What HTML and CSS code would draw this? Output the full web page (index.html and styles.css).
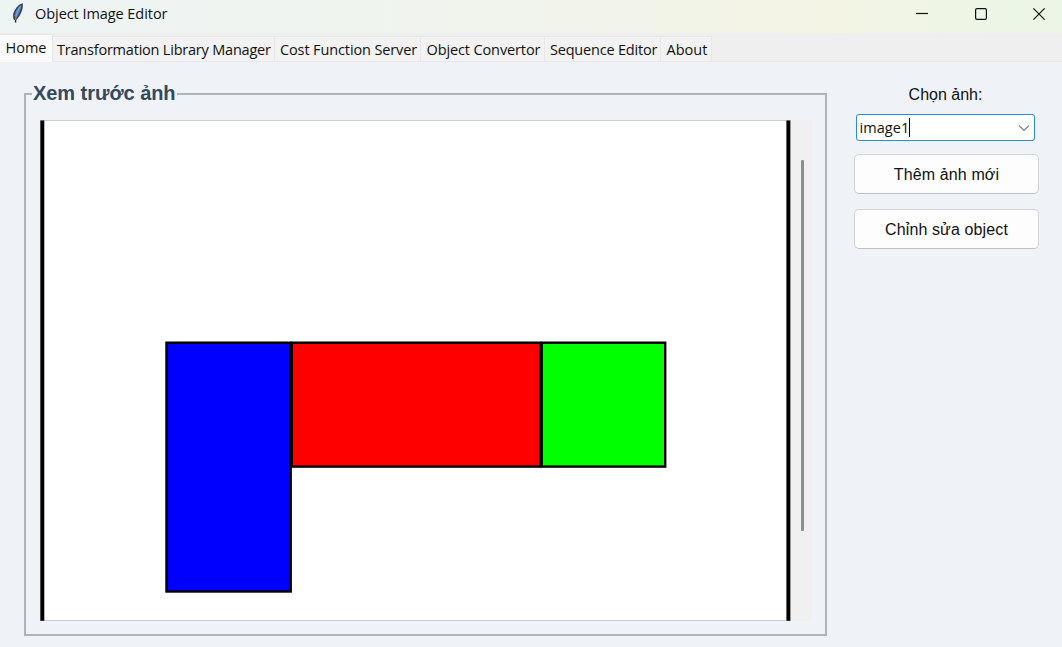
FILE: index.html
```html
<!DOCTYPE html>
<html lang="vi">
<head>
<meta charset="utf-8">
<title>Object Image Editor</title>
<link rel="stylesheet" href="styles.css">
</head>
<body>
<div class="window">
  <header class="titlebar">
    <svg class="feather" width="18" height="22" viewBox="0 0 18 22">
      <path d="M6.500 20.500L6.800 17" fill="none" stroke="#222" stroke-width="1.300"/>
      <path d="M13.800 1.200C9.500 2 5.200 7 4 13L4.300 17L6.300 18.500C10.500 15.500 14.600 8 13.800 1.200Z" fill="#3c434c"/>
      <path d="M12.300 3C8.800 5 6.200 9.500 5.400 14L7.300 15.500C10 12 12.200 7.500 12.300 3Z" fill="#4688cf"/>
      <path d="M11.500 4C9 8 7.300 12 6.500 17.500" fill="none" stroke="#a5bdd5" stroke-width=".7"/>
    </svg>
    <h1 class="title">Object Image Editor</h1>
    <div class="controls">
      <svg width="12" height="12" viewBox="0 0 12 12"><path d="M0 5.500H12"/></svg>
      <svg width="12" height="12" viewBox="0 0 12 12"><rect x=".6" y=".6" width="10.800" height="10.800" rx="1.300"/></svg>
      <svg width="12" height="12" viewBox="0 0 12 12"><path d="M.4 .4L11.600 11.600M11.600 .4L.4 11.600"/></svg>
    </div>
  </header>
  <nav class="tabs">
    <a class="tab tab-home">Home</a>
    <a class="tab tab-library">Transformation Library Manager</a>
    <a class="tab tab-cost">Cost Function Server</a>
    <a class="tab tab-convertor">Object Convertor</a>
    <a class="tab tab-sequence">Sequence Editor</a>
    <a class="tab tab-about">About</a>
  </nav>
  <main class="content">
    <fieldset class="preview">
      <legend class="preview-title">Xem trước ảnh</legend>
      <div class="viewer">
        <svg class="canvas" width="751" height="502" viewBox="0 0 751 502">
          <rect width="751" height="501" fill="#fff"/>
          <path d="M0 .5H751M0 500.500H751" stroke="#c9ccd0"/>
          <path d="M2.300 .5V500.700M748.400 .5V500.700" stroke="#000" stroke-width="4"/>
          <g stroke="#000" stroke-width="2.400">
            <rect x="126.500" y="222.700" width="124.200" height="248.800" fill="#00f"/>
            <rect x="251.800" y="222.700" width="248.800" height="123.900" fill="#f00"/>
            <rect x="501.700" y="222.700" width="123.500" height="123.900" fill="#0f0"/>
          </g>
        </svg>
        <div class="scrollbar"><div class="thumb"></div></div>
      </div>
    </fieldset>
    <aside class="side">
      <label class="label">Chọn ảnh:</label>
      <div class="combo">
        <span class="value">image1</span><span class="caret"></span>
        <svg class="chevron" width="12" height="8" viewBox="0 0 12 8"><path d="M1 1.500L6 6.300L11 1.500"/></svg>
      </div>
      <button class="button button-add"><span>Thêm ảnh mới</span></button>
      <button class="button button-edit"><span>Chỉnh sửa object</span></button>
    </aside>
  </main>
</div>
</body>
</html>
```

FILE: styles.css
```css
* { box-sizing: border-box; }
body { margin: 0; font-family: "Open Sans", "Noto Sans", sans-serif; color: #111; }
.window { width: 1062px; height: 647px; display: flex; flex-direction: column; background: #eff3f8; overflow: hidden; }

.titlebar { height: 33px; flex: none; display: flex; align-items: flex-start; padding: 2px 17px 0 9px; background: linear-gradient(90deg, #edf4f4 0%, #f1f4ed 45%, #f3f4e4 78%, #eaf6e6 100%); }
.feather { flex: none; }
.title { margin: 3px 0 0 8px; font-size: 14.5px; line-height: 18px; font-weight: 400; letter-spacing: -.06px; white-space: nowrap; }
.controls { margin: 6px 0 0 auto; display: flex; gap: 46.5px; }
.controls svg { fill: none; stroke: #111; stroke-width: 1.2; overflow: visible; }

.tabs { height: 29px; flex: none; display: flex; align-items: flex-end; background: #efefef; border-bottom: 1px solid #e8e8e8; }
.tab { height: 25px; flex: none; padding: 4px 0 0 4px; background: #f2f2f2; border: 1px solid #e8e8e8; border-width: 1px 1px 0 0; font-size: 14.5px; line-height: 18px; white-space: nowrap; overflow: hidden; }
.tab-home { width: 53px; height: 28px; margin-bottom: -1px; padding: 4px 0 0 5.5px; background: #fafafa; }
.tab-library { width: 222px; letter-spacing: -.21px; }
.tab-cost { width: 146px; padding-left: 5px; letter-spacing: -.12px; }
.tab-convertor { width: 124px; padding-left: 5.5px; letter-spacing: -.12px; }
.tab-sequence { width: 116px; padding-left: 5px; letter-spacing: -.2px; }
.tab-about { width: 51px; padding-left: 5.5px; letter-spacing: 0; }

.content { flex: 1; display: flex; align-items: flex-start; padding: 20px 23px 0 24px; }
.preview { width: 803px; height: 553.5px; flex: none; margin: 0; padding: 15px 13px 0 14px; border: 2px solid #b0b4b8; min-width: 0; }
.preview-title { height: 23px; margin-left: -8px; padding: 0 1px; font: 700 20px/23px "Liberation Sans", sans-serif; letter-spacing: -.05px; color: #34495e; white-space: nowrap; }
.viewer { display: flex; }
.canvas { flex: none; display: block; }
.scrollbar { width: 21px; height: 501px; margin-left: 1px; padding: 40px 0 0 9px; background: #f0f0f0; }
.thumb { width: 3px; height: 371px; background: #8f8f8f; border-radius: 1px; }

.side { width: 185px; margin-left: auto; display: flex; flex-direction: column; align-items: center; padding-top: 3px; font-family: "Liberation Sans", sans-serif; }
.label { height: 20px; margin-left: -2px; font-size: 16px; line-height: 20px; white-space: nowrap; }
.combo { width: 179px; height: 27px; margin: 9px 0 13px -3px; display: flex; align-items: center; padding: 0 4px 0 3px; background: #fff; border: 1px solid #2b8ad8; border-radius: 3px; }
.value { font: 14.5px/20px "Open Sans", sans-serif; letter-spacing: .05px; }
.caret { width: 1px; height: 19px; background: #000; }
.chevron { margin-left: auto; fill: none; stroke: #888; stroke-width: 1.2; }
.button { width: 185px; height: 40px; padding: 2px 0 0; background: #fdfdfd; border: 1px solid #d2d4d6; border-bottom-color: #bec0c2; border-radius: 5px; font: 16px/20px "Liberation Sans", sans-serif; letter-spacing: .12px; color: #111; white-space: nowrap; }
.button-edit { margin-top: 15px; }
```
